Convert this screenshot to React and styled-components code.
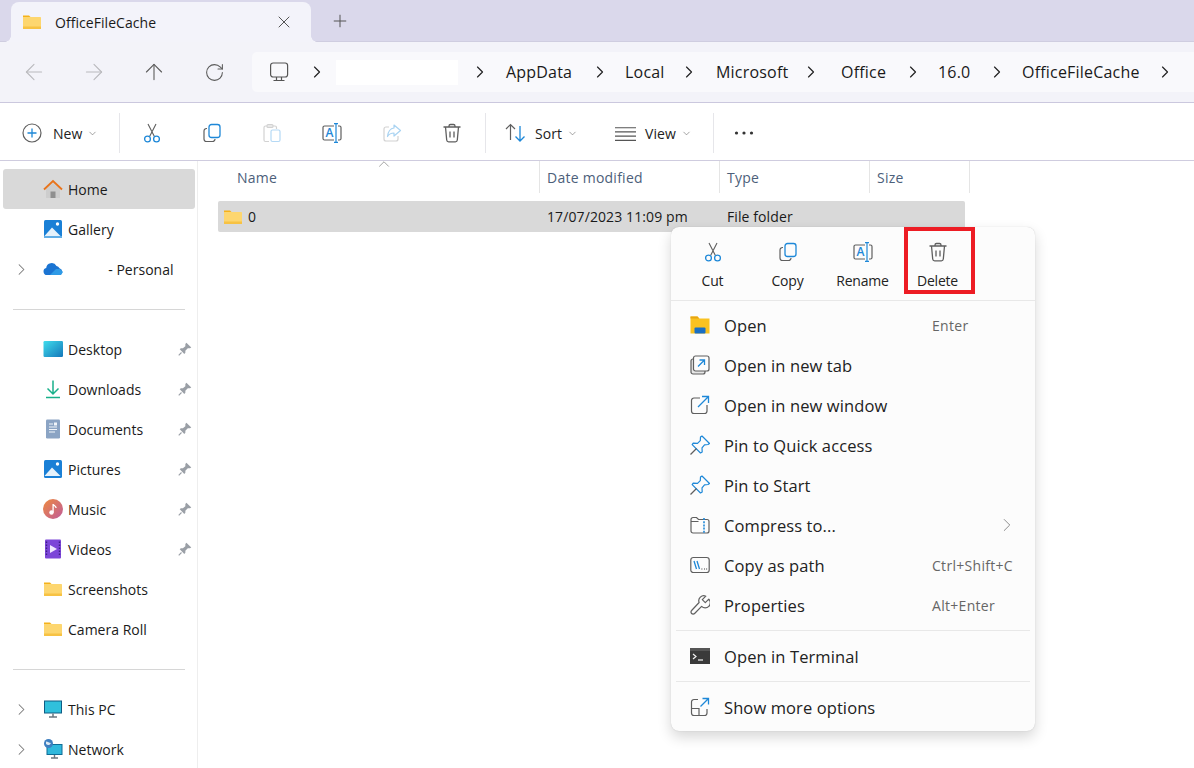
import React from 'react'
import styled, { createGlobalStyle } from 'styled-components'
import { ArrowLeft, ArrowRight, ArrowUp, RotateCw, ChevronRight, ChevronDown, ChevronUp, X, Plus } from 'lucide-react'

const GlobalStyle = createGlobalStyle`
    html, body { margin: 0; padding: 0; background: #fff; }
    body { font-family: "Open Sans", "Noto Sans", sans-serif; color: #1a1a1a; }
`

const BLUE = '#1e88d8'
const GRAY = '#5f5f5f'

const Window = styled.div`
    position: relative;
    width: 1194px;
    height: 768px;
    overflow: hidden;
    background: #fff;
    display: flex;
    flex-direction: column;
`
const TabStrip = styled.div`
    height: 41px;
    flex: none;
    background: #dad8eb;
    border-bottom: 1px solid #cfcde0;
    display: flex;
    align-items: flex-end;
    padding-left: 11px;
`
const Tab = styled.div`
    position: relative;
    width: 300px;
    height: 40px;
    margin-bottom: -1px;
    background: #f3f3fa;
    border-radius: 8px 8px 0 0;
    display: flex;
    align-items: center;
    padding: 0 17px 0 11px;
    box-sizing: border-box;
    font-size: 14px;
    letter-spacing: 0.05px;

    &::before, &::after {
        content: '';
        position: absolute;
        bottom: 0;
        width: 6px;
        height: 6px;
    }
    &::before {
        left: -6px;
        background: radial-gradient(circle at 0 0, transparent 5.5px, #f3f3fa 6px);
    }
    &::after {
        right: -6px;
        background: radial-gradient(circle at 100% 0, transparent 5.5px, #f3f3fa 6px);
    }
`
const TabTitle = styled.span`
    flex: 1;
    margin-left: 13px;
`
const NewTab = styled.div`
    width: 20px;
    height: 40px;
    margin-left: 19px;
    display: flex;
    align-items: center;
    justify-content: center;
    color: #555;
`
const NavBar = styled.div`
    height: 60px;
    flex: none;
    background: #f3f3f9;
    border-bottom: 1px solid #cbc8de;
    display: flex;
    align-items: center;
    padding-left: 4px;
`
const NavButton = styled.div`
    width: 60px;
    display: flex;
    justify-content: center;
    color: ${p => (p.$off ? '#b9b9bd' : '#5a5a5a')};
`
const AddressBar = styled.div`
    margin-left: 8px;
    flex: 1;
    height: 40px;
    background: #f9f9fc;
    border-radius: 5px 0 0 5px;
    display: flex;
    align-items: center;
    padding-left: 17px;
    font-size: 16px;
    letter-spacing: 0.2px;
`
const Crumb = styled.span`
    width: ${p => p.$w}px;
    flex: none;
    white-space: nowrap;
`
const CrumbArrow = styled.span`
    width: ${p => p.$w}px;
    padding-left: ${p => p.$pad || 0}px;
    box-sizing: border-box;
    flex: none;
    display: flex;
    color: #222;
`
const HiddenName = styled.div`
    width: 122px;
    height: 25px;
    flex: none;
    background: #fff;
`
const Toolbar = styled.div`
    height: 58px;
    flex: none;
    box-sizing: border-box;
    padding-top: 3px;
    background: #fff;
    border-bottom: 1px solid #cfccdf;
    display: flex;
    align-items: center;
    font-size: 14px;
    letter-spacing: 0.05px;
`
const ToolLabel = styled.div`
    width: ${p => p.$w}px;
    flex: none;
    display: flex;
    align-items: center;
    padding-left: ${p => p.$pad}px;
    box-sizing: border-box;
    color: #222;
`
const LabelText = styled.span`
    margin: 0 5px 0 ${p => p.$gap}px;
`
const ToolIcon = styled.div`
    width: 60px;
    flex: none;
    display: flex;
    justify-content: center;
`
const ToolSep = styled.div`
    width: 1px;
    height: 40px;
    flex: none;
    background: #e6e6ea;
    margin: 0 ${p => p.$right || 0}px 0 ${p => p.$left || 0}px;
`
const Main = styled.div`
    flex: 1;
    display: flex;
    min-height: 0;
`
const Sidebar = styled.nav`
    width: 192px;
    flex: none;
    border-right: 1px solid #eeeeee;
    padding: 8px 2px 0 3px;
`
const NavRow = styled.div`
    height: 40px;
    display: grid;
    grid-template-columns: 40px 20px 1fr 22px;
    align-items: center;
    font-size: 14px;
    letter-spacing: 0.02px;
    border-radius: 3px;
    background: ${p => (p.$active ? '#d9d9d9' : 'transparent')};
    white-space: pre;
`
const Twisty = styled.span`
    display: flex;
    padding-left: 9px;
    color: #777;
`
const RowIcon = styled.span`
    display: flex;
    justify-content: center;
`
const PinSlot = styled.span`
    display: flex;
    justify-content: center;
    padding-left: 2px;
`
const RowText = styled.span`
    padding-left: 5px;
`
const SideSep = styled.div`
    height: 1px;
    background: #d6d6d6;
    margin: 20px 10px 19px 10px;
`
const Content = styled.div`
    flex: 1;
    min-width: 0;
`
const HeaderRow = styled.div`
    display: grid;
    grid-template-columns: 342px 180px 150px 100px;
    height: 32px;
    font-size: 14px;
    letter-spacing: 0.25px;
    color: #4c607a;
`
const HeaderCell = styled.div`
    position: relative;
    display: flex;
    align-items: center;
    padding-left: ${p => p.$pad || 7}px;
    border-right: 1px solid #e5e5e5;
`
const SortCaret = styled.span`
    position: absolute;
    left: 177px;
    top: -6px;
    display: flex;
    color: #777;
`
const FileRow = styled.div`
    margin: 8px 0 0 20px;
    width: 747px;
    height: 31px;
    background: #d9d9d9;
    border-radius: 2px;
    display: grid;
    grid-template-columns: 322px 180px 1fr;
    align-items: center;
    font-size: 14px;
    letter-spacing: 0.1px;
`
const FileName = styled.div`
    display: flex;
    align-items: center;
    gap: 5px;
    padding-left: 5px;
`
const FileCell = styled.div`
    padding-left: 7px;
`
const ContextMenu = styled.div`
    position: absolute;
    left: 671px;
    top: 227px;
    width: 364px;
    height: 504px;
    box-sizing: border-box;
    background: #fcfcfc;
    border-radius: 8px;
    box-shadow: 0 0 1px rgba(0, 0, 0, 0.22), 0 6px 14px rgba(0, 0, 0, 0.16);
    display: flex;
    flex-direction: column;
`
const ActionRow = styled.div`
    height: 73px;
    flex: none;
    padding-left: 4px;
    display: flex;
    border-bottom: 1px solid #e8e8e8;
`
const Action = styled.div`
    width: 75px;
    display: flex;
    flex-direction: column;
    align-items: center;
    padding-top: 15px;
    font-size: 14px;
    letter-spacing: -0.2px;
    gap: 9px;
    color: #222;
`
const MenuList = styled.div`
    padding-top: 4px;
`
const MenuItem = styled.div`
    height: 40px;
    display: grid;
    grid-template-columns: 20px 1fr 103px;
    column-gap: 14px;
    align-items: center;
    padding-left: 19px;
    font-size: 16.5px;
    letter-spacing: 0.1px;
    color: #222;
`
const Shortcut = styled.span`
    font-size: 14px;
    letter-spacing: 0.3px;
    color: #666;
`
const MoreArrow = styled.span`
    display: flex;
    padding-left: 64px;
    color: #777;
`
const MenuSep = styled.div`
    height: 1px;
    background: #e8e8e8;
    margin: 5px;
`
const Highlight = styled.div`
    position: absolute;
    left: 233px;
    top: 0;
    width: 71px;
    height: 67px;
    box-sizing: border-box;
    border: 4px solid #ed1c24;
`

const Svg = ({ size = 20, children }) => (
    <svg width={size} height={size} viewBox="0 0 20 20" fill="none">{children}</svg>
)

const FolderIcon = ({ size = 20 }) => (
    <Svg size={size}>
        <path d="M1 3.5h6l2 2h-8z" fill="#f5b21a" />
        <rect x="1" y="5" width="18" height="12" rx="0.6" fill="#fdd66f" />
        <rect x="1" y="14.5" width="18" height="2.5" fill="#f7c243" />
    </Svg>
)
const CutIcon = () => (
    <Svg>
        <path d="M6 1l6.400 12.500M14 1L7.600 13.500" stroke={GRAY} strokeWidth="1.1" />
        <circle cx="5.500" cy="16" r="2.900" stroke={BLUE} strokeWidth="1.300" />
        <circle cx="14.500" cy="16" r="2.900" stroke={BLUE} strokeWidth="1.300" />
    </Svg>
)
const CopyIcon = () => (
    <Svg>
        <path d="M5 5.500h-.5A2.500 2.500 0 0 0 2 8v8a2.500 2.500 0 0 0 2.500 2.500h6A2.500 2.500 0 0 0 13 16" stroke={GRAY} strokeWidth="1.200" />
        <rect x="7" y="1.500" width="11" height="13" rx="2.500" stroke={BLUE} strokeWidth="1.300" />
    </Svg>
)
const PasteIcon = () => (
    <Svg>
        <path d="M7 18.500H3.500A1.500 1.500 0 0 1 2 17V4.500A1.500 1.500 0 0 1 3.500 3H13a1.500 1.500 0 0 1 1.500 1.500V6" stroke="#d2d2d2" strokeWidth="1.200" />
        <rect x="5" y="1.500" width="6" height="3" rx="1" stroke="#d2d2d2" strokeWidth="1.100" />
        <rect x="9" y="7" width="9" height="11.500" rx="1.500" stroke="#b5d9f5" strokeWidth="1.200" />
    </Svg>
)
const RenameIcon = () => (
    <Svg>
        <path d="M12 3H2.500A1.500 1.500 0 0 0 1 4.500v11A1.500 1.500 0 0 0 2.500 17H12M16 3h1.500A1.500 1.500 0 0 1 19 4.500v11a1.500 1.500 0 0 1-1.500 1.500H16" stroke={GRAY} strokeWidth="1.200" />
        <path d="M12 0.700h4M14 0.700v18.600M12 19.300h4" stroke={BLUE} strokeWidth="1.200" />
        <text x="3.500" y="14.200" fontSize="12" fontWeight="600" fontFamily="Open Sans" fill={BLUE}>A</text>
    </Svg>
)
const ShareIcon = () => (
    <Svg>
        <path d="M7 4H4a2 2 0 0 0-2 2v10a2 2 0 0 0 2 2h10a2 2 0 0 0 2-2v-3" stroke="#d2d2d2" strokeWidth="1.200" />
        <path d="M12 2l6.500 5.500-6.500 5.500v-3c-3 0-5 1-6.500 3.500C6 9 8 5.500 12 5z" stroke="#a9d3f2" strokeWidth="1.200" strokeLinejoin="round" />
    </Svg>
)
const TrashIcon = () => (
    <Svg>
        <path d="M1.500 4h17M7 4V3a1.500 1.500 0 0 1 1.500-1.500h3A1.500 1.500 0 0 1 13 3v1M3.500 4l1.200 13a2 2 0 0 0 2 1.800h6.600a2 2 0 0 0 2-1.800L16.500 4" stroke={GRAY} strokeWidth="1.300" />
        <path d="M8 8.500v6M12 8.500v6" stroke={GRAY} strokeWidth="1.300" />
    </Svg>
)
const NewIcon = () => (
    <Svg>
        <circle cx="10" cy="10" r="9" stroke={GRAY} strokeWidth="1.200" />
        <path d="M10 5.500v9M5.500 10h9" stroke={BLUE} strokeWidth="1.300" />
    </Svg>
)
const SortIcon = () => (
    <Svg>
        <path d="M1 6l4.500-4.500L10 6M5.500 2v15" stroke={GRAY} strokeWidth="1.200" />
        <path d="M10.500 13.500L15 18l4.500-4.500M15 18V3" stroke={BLUE} strokeWidth="1.300" />
    </Svg>
)
const ViewIcon = () => (
    <Svg size={21}>
        <path d="M0 4.500h20M0 8.500h20M0 12.500h20M0 16.500h20" stroke="#555" strokeWidth="1.100" />
    </Svg>
)
const DotsIcon = () => (
    <Svg>
        <circle cx="2.500" cy="10" r="1.600" fill="#333" />
        <circle cx="10" cy="10" r="1.600" fill="#333" />
        <circle cx="17.500" cy="10" r="1.600" fill="#333" />
    </Svg>
)
const MonitorIcon = () => (
    <Svg>
        <rect x="1.600" y="1" width="17" height="14" rx="2.500" stroke="#555" strokeWidth="1.200" />
        <path d="M7.500 15v3.500M12.500 15v3.500M4.500 18.500h11" stroke="#555" strokeWidth="1.200" />
    </Svg>
)
const HomeIcon = () => (
    <Svg>
        <path d="M3 10L10 4 17 10v9H3z" fill="#cdcdcd" />
        <rect x="7.500" y="12.500" width="5" height="6.500" fill="#8f8f8f" />
        <path d="M1 10.500L10 2l9 8.500" stroke="#e8741c" strokeWidth="1.900" />
    </Svg>
)
const PictureIcon = ({ stack }) => (
    <Svg>
        <rect x="1" y="1" width="18" height="18" rx="1.500" fill="#1a80d6" />
        <circle cx="14.500" cy="5" r="1.700" fill="#fff" />
        <path d="M1.500 17L9 8.500 17.500 17z" fill="#e6f2fb" />
        {stack && <rect x="1" y="17" width="18" height="2" fill="#62aee6" />}
    </Svg>
)
const CloudIcon = () => (
    <Svg>
        <path d="M4 16a3.500 3.500 0 0 1-.8-6.900A5.500 5.500 0 0 1 13.500 7a4.500 4.500 0 0 1 3 2.200A3.500 3.500 0 0 1 16.500 16z" fill="#1b74d2" />
        <path d="M7 16l6-6 4 0 3 3-2 3z" fill="#2f9ae6" />
    </Svg>
)
const DesktopIcon = () => (
    <Svg>
        <defs>
            <linearGradient id="desk" x1="0" y1="0" x2="1" y2="1">
                <stop offset="0" stopColor="#3fdcec" />
                <stop offset="1" stopColor="#1477ba" />
            </linearGradient>
        </defs>
        <rect x="0.500" y="2" width="19.500" height="16" rx="1.200" fill="url(#desk)" />
    </Svg>
)
const DownloadIcon = () => (
    <Svg>
        <path d="M10 1.500v13M4.500 9.500L10 15l5.500-5.500" stroke="#18b08a" strokeWidth="1.500" />
        <path d="M3 18.500h14" stroke="#18b08a" strokeWidth="1.500" />
    </Svg>
)
const DocIcon = () => (
    <Svg>
        <rect x="3" y="0.500" width="14" height="19" rx="1.200" fill="#8ba4c4" />
        <path d="M6 5h4M6 8h8M6 10.500h8M6 13h6" stroke="#f1f5fa" strokeWidth="1.100" />
        <rect x="11" y="3.500" width="3" height="3" fill="#f1f5fa" />
    </Svg>
)
const MusicIcon = () => (
    <Svg>
        <defs>
            <linearGradient id="mus" x1="0" y1="0" x2="1" y2="1">
                <stop offset="0" stopColor="#ee8a3e" />
                <stop offset="1" stopColor="#c05c9b" />
            </linearGradient>
        </defs>
        <circle cx="10" cy="10" r="10" fill="url(#mus)" />
        <circle cx="8.500" cy="13.500" r="2.200" fill="#fff" />
        <path d="M10.100 13.500V5c0 1.500 3 1.800 3 4" stroke="#fff" strokeWidth="1.300" />
    </Svg>
)
const VideoIcon = () => (
    <Svg>
        <rect x="2" y="0.500" width="16" height="19" rx="1" fill="#7c46d8" />
        <path d="M7 6l7 4-7 4z" fill="#f0e8ff" />
        <path d="M3.500 2.500v15M16.500 2.500v15" stroke="#3d1f85" strokeWidth="1.400" strokeDasharray="1.500 1.500" />
    </Svg>
)
const PcIcon = () => (
    <Svg>
        <rect x="1" y="1.500" width="18" height="13" fill="#0e5c84" />
        <rect x="2" y="2.500" width="16" height="11" fill="#30c0dc" />
        <path d="M10 14.500v3M6 18h8" stroke="#6b7780" strokeWidth="1.500" />
    </Svg>
)
const NetworkIcon = () => (
    <Svg>
        <rect x="3.500" y="5" width="16" height="11" fill="#0e6d96" />
        <rect x="4.500" y="6" width="14" height="9" fill="#30b8dc" />
        <path d="M11.500 16v2.500M8 19h7" stroke="#6b7780" strokeWidth="1.400" />
        <circle cx="5.500" cy="4.500" r="4.500" fill="#3f7fc0" />
        <path d="M3 2.500c2 0 3 1.500 5 1.500-1 2-3 3-5 1z" fill="#dfeaf3" />
    </Svg>
)
const SidePin = () => (
    <Svg size={14}>
        <path d="M12 1l7 7-2 1-3 0-3.500 3.500v3l-1.500 1.500-6.500-6.500 1.500-1.500h3L10.500 6v-3z" fill="#9a9fa6" />
        <path d="M5 15l-4 4" stroke="#9a9fa6" strokeWidth="1.600" />
    </Svg>
)
const OpenIcon = () => (
    <Svg>
        <path d="M0.500 1.500h7l2 2h10v15h-19z" fill="#f9c221" />
        <path d="M0.500 1.500h7l1.500 2h-8.500z" fill="#e8a512" />
        <rect x="4.500" y="12.500" width="11" height="6" rx="1" fill="#1a6fc4" />
    </Svg>
)
const NewTabIcon = () => (
    <Svg>
        <rect x="1" y="4" width="14" height="15" rx="2" stroke={GRAY} strokeWidth="1.200" fill="#e6e6e6" />
        <rect x="3.500" y="1" width="15.500" height="15" rx="2" stroke={GRAY} strokeWidth="1.200" fill="#fcfcfc" />
        <path d="M8 11.500l6.500-6.500M9.500 5h5v5" stroke={BLUE} strokeWidth="1.300" />
    </Svg>
)
const NewWindowIcon = () => (
    <Svg>
        <path d="M10 3H4a2.500 2.500 0 0 0-2.500 2.500V16A2.500 2.500 0 0 0 4 18.500h10.500A2.500 2.500 0 0 0 17 16v-6" stroke={GRAY} strokeWidth="1.200" />
        <path d="M8 12L18 2M12 1.500h6.500V8" stroke={BLUE} strokeWidth="1.300" />
    </Svg>
)
const PinIcon = () => (
    <Svg>
        <path d="M12 1l7.500 7.500-1.500 1-3.500.3-2.500 3 .2 4.200-1.700 1L2.200 9.700l1-1.500 4.300.2 2.800-2.800.2-3.500z" stroke={BLUE} strokeWidth="1.200" strokeLinejoin="round" />
        <path d="M6.500 13.500L0.500 19.500" stroke={GRAY} strokeWidth="1.200" />
    </Svg>
)
const ZipIcon = () => (
    <Svg>
        <path d="M1 4.500A2 2 0 0 1 3 2.500h3.500l2 2H17a2 2 0 0 1 2 2V16a2 2 0 0 1-2 2H3a2 2 0 0 1-2-2zM1 6.500h7.500" stroke={GRAY} strokeWidth="1.200" />
        <path d="M14 3v15" stroke={BLUE} strokeWidth="1.600" strokeDasharray="2 1.200" />
    </Svg>
)
const PathIcon = () => (
    <Svg>
        <rect x="0.800" y="2.500" width="18.400" height="15" rx="2.500" stroke={GRAY} strokeWidth="1.200" />
        <path d="M4 6l2.500 8M7 6l2.500 8" stroke={BLUE} strokeWidth="1.300" />
        <path d="M11.500 14h.8M14 14h.8M16.300 14h.8" stroke={GRAY} strokeWidth="1.300" />
    </Svg>
)
const WrenchIcon = () => (
    <Svg>
        <path d="M18.800 4.200l-3.500 3.500-3-3 3.500-3.500a5 5 0 0 0-6.700 6.300L1.600 15.500a2.100 2.100 0 0 0 3 3l7-7.100a5 5 0 0 0 7.200-7.200z" stroke={GRAY} strokeWidth="1.200" strokeLinejoin="round" />
    </Svg>
)
const TerminalIcon = () => (
    <Svg>
        <rect x="0" y="2" width="20" height="16" fill="#3a3a3a" />
        <rect x="0" y="2" width="20" height="3" fill="#555" />
        <path d="M3 8l3 2.500-3 2.500" stroke="#f2f2f2" strokeWidth="1.200" />
        <path d="M8 14h5" stroke="#f2f2f2" strokeWidth="1.200" />
    </Svg>
)
const MoreOptionsIcon = () => (
    <Svg>
        <path d="M8 2.500H4A2.500 2.500 0 0 0 1.500 5v11A2.500 2.500 0 0 0 4 18.500h10.500A2.500 2.500 0 0 0 17 16v-4M1.500 11.500H9v7" stroke={GRAY} strokeWidth="1.200" />
        <path d="M10.500 9.500L18 2M12.500 1.500h6V7.500" stroke={BLUE} strokeWidth="1.300" />
    </Svg>
)

const crumbs = [
    ['AppData', 84, 35],
    ['Local', 54, 37],
    ['Microsoft', 85, 40],
    ['Office', 62, 35],
    ['16.0', 49, 35],
    ['OfficeFileCache', 133, 22],
]

const tree = [
    { label: 'Home', icon: <HomeIcon />, active: true },
    { label: 'Gallery', icon: <PictureIcon stack /> },
    { label: '           - Personal', icon: <CloudIcon />, twisty: true },
    { sep: true },
    { label: 'Desktop', icon: <DesktopIcon />, pin: true },
    { label: 'Downloads', icon: <DownloadIcon />, pin: true },
    { label: 'Documents', icon: <DocIcon />, pin: true },
    { label: 'Pictures', icon: <PictureIcon />, pin: true },
    { label: 'Music', icon: <MusicIcon />, pin: true },
    { label: 'Videos', icon: <VideoIcon />, pin: true },
    { label: 'Screenshots', icon: <FolderIcon /> },
    { label: 'Camera Roll', icon: <FolderIcon /> },
    { sep: true },
    { label: 'This PC', icon: <PcIcon />, twisty: true },
    { label: 'Network', icon: <NetworkIcon />, twisty: true },
]

const App = () => {
    return (
        <Window>
            <GlobalStyle />
            <TabStrip>
                <Tab>
                    <FolderIcon size={20} />
                    <TabTitle>OfficeFileCache</TabTitle>
                    <X size={20} strokeWidth={1.1} color="#444" />
                </Tab>
                <NewTab><Plus size={20} strokeWidth={1.2} /></NewTab>
            </TabStrip>
            <NavBar>
                <NavButton $off><ArrowLeft size={26} strokeWidth={1} /></NavButton>
                <NavButton $off><ArrowRight size={26} strokeWidth={1} /></NavButton>
                <NavButton><ArrowUp size={26} strokeWidth={1} /></NavButton>
                <NavButton><RotateCw size={21} strokeWidth={1.2} /></NavButton>
                <AddressBar>
                    <CrumbArrow $w={38}><MonitorIcon /></CrumbArrow>
                    <CrumbArrow $w={29}><ChevronRight size={20} strokeWidth={1.4} /></CrumbArrow>
                    <HiddenName />
                    <CrumbArrow $w={48} $pad={12}><ChevronRight size={20} strokeWidth={1.4} /></CrumbArrow>
                    {crumbs.map(([name, w, arrow]) => (
                        <React.Fragment key={name}>
                            <Crumb $w={w}>{name}</Crumb>
                            <CrumbArrow $w={arrow}><ChevronRight size={20} strokeWidth={1.4} /></CrumbArrow>
                        </React.Fragment>
                    ))}
                </AddressBar>
            </NavBar>
            <Toolbar>
                <ToolLabel $w={119} $pad={22}>
                    <NewIcon />
                    <LabelText $gap={11}>New</LabelText>
                    <ChevronDown size={11} strokeWidth={1.3} color="#666" />
                </ToolLabel>
                <ToolSep $right={2} />
                <ToolIcon><CutIcon /></ToolIcon>
                <ToolIcon><CopyIcon /></ToolIcon>
                <ToolIcon><PasteIcon /></ToolIcon>
                <ToolIcon><RenameIcon /></ToolIcon>
                <ToolIcon><ShareIcon /></ToolIcon>
                <ToolIcon><TrashIcon /></ToolIcon>
                <ToolSep $left={3} />
                <ToolLabel $w={100} $pad={19}>
                    <SortIcon />
                    <LabelText $gap={10}>Sort</LabelText>
                    <ChevronDown size={11} strokeWidth={1.3} color="#666" />
                </ToolLabel>
                <ToolLabel $w={127} $pad={29}>
                    <ViewIcon />
                    <LabelText $gap={9}>View</LabelText>
                    <ChevronDown size={11} strokeWidth={1.3} color="#666" />
                </ToolLabel>
                <ToolSep />
                <ToolIcon><DotsIcon /></ToolIcon>
            </Toolbar>
            <Main>
                <Sidebar>
                    {tree.map((row, i) => row.sep ? (
                        <SideSep key={i} />
                    ) : (
                        <NavRow key={row.label} $active={row.active}>
                            <Twisty>{row.twisty && <ChevronRight size={19} strokeWidth={1.3} />}</Twisty>
                            <RowIcon>{row.icon}</RowIcon>
                            <RowText>{row.label}</RowText>
                            <PinSlot>{row.pin && <SidePin />}</PinSlot>
                        </NavRow>
                    ))}
                </Sidebar>
                <Content>
                    <HeaderRow>
                        <HeaderCell $pad={39}>
                            Name
                            <SortCaret><ChevronUp size={18} strokeWidth={0.9} /></SortCaret>
                        </HeaderCell>
                        <HeaderCell>Date modified</HeaderCell>
                        <HeaderCell>Type</HeaderCell>
                        <HeaderCell>Size</HeaderCell>
                    </HeaderRow>
                    <FileRow>
                        <FileName><FolderIcon />0</FileName>
                        <FileCell>17/07/2023 11:09 pm</FileCell>
                        <FileCell>File folder</FileCell>
                    </FileRow>
                </Content>
            </Main>
            <ContextMenu>
                <ActionRow>
                    <Action><CutIcon />Cut</Action>
                    <Action><CopyIcon />Copy</Action>
                    <Action><RenameIcon />Rename</Action>
                    <Action><TrashIcon />Delete</Action>
                </ActionRow>
                <MenuList>
                    <MenuItem><OpenIcon /><span>Open</span><Shortcut>Enter</Shortcut></MenuItem>
                    <MenuItem><NewTabIcon /><span>Open in new tab</span></MenuItem>
                    <MenuItem><NewWindowIcon /><span>Open in new window</span></MenuItem>
                    <MenuItem><PinIcon /><span>Pin to Quick access</span></MenuItem>
                    <MenuItem><PinIcon /><span>Pin to Start</span></MenuItem>
                    <MenuItem><ZipIcon /><span>Compress to...</span><MoreArrow><ChevronRight size={22} strokeWidth={0.9} /></MoreArrow></MenuItem>
                    <MenuItem><PathIcon /><span>Copy as path</span><Shortcut>Ctrl+Shift+C</Shortcut></MenuItem>
                    <MenuItem><WrenchIcon /><span>Properties</span><Shortcut>Alt+Enter</Shortcut></MenuItem>
                    <MenuSep />
                    <MenuItem><TerminalIcon /><span>Open in Terminal</span></MenuItem>
                    <MenuSep />
                    <MenuItem><MoreOptionsIcon /><span>Show more options</span></MenuItem>
                </MenuList>
                <Highlight />
            </ContextMenu>
        </Window>
    )
}

export default App
